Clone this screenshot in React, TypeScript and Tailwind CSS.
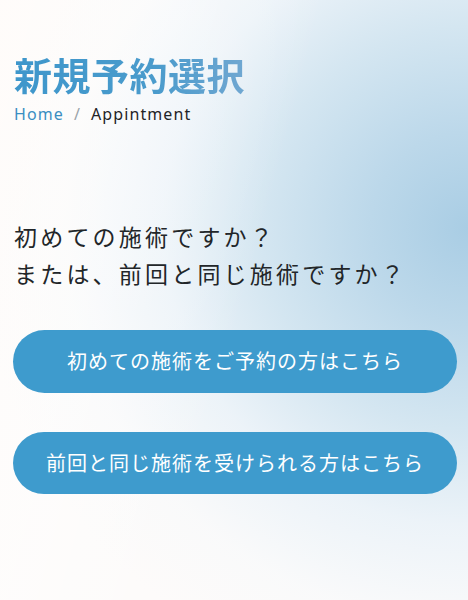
export default function App() {
  return (
    <div className="relative min-h-[600px] w-full overflow-hidden bg-[#fdfbfa] font-['Noto_Sans_CJK_JP',sans-serif]">
      <div className="absolute inset-0 bg-[radial-gradient(ellipse_105%_80%_at_100%_38%,#a9cde4_0%,#bcd8ea_20%,#d4e6f1_42%,rgba(232,241,248,0.8)_62%,rgba(244,248,251,0.4)_82%,rgba(255,255,255,0)_100%)]" />
      <div className="absolute inset-0 bg-[linear-gradient(105deg,rgba(255,252,250,0.85)_0%,rgba(255,255,255,0.35)_28%,rgba(255,255,255,0)_52%)]" />

      <div className="relative flex flex-col pt-[51px]">
        <h1 className="px-[14px] text-[38px] font-bold leading-[1.2] tracking-[0.5px] w-fit bg-[linear-gradient(90deg,#3d96cb_0%,#4a9bcc_60%,#76a9d2_100%)] bg-clip-text text-transparent">
          新規予約選択
        </h1>
        <div className="px-[14px] mt-[9px] flex items-center text-[16px] tracking-[1.1px] font-['Noto_Sans',sans-serif] leading-none">
          <span className="text-[#3a8ec2]">Home</span>
          <span className="mx-[10px] text-[#9aa3aa]">/</span>
          <span className="text-[#1f2326]">Appintment</span>
        </div>

        <div className="px-[14px] mt-[96px] text-[23px] leading-[37px] tracking-[3.2px] text-[#222629]">
          <p>初めての施術ですか？</p>
          <p>または、前回と同じ施術ですか？</p>
        </div>

        <div className="ml-[13px] mr-[11px] mt-[38px] flex flex-col gap-[39px]">
          <button className="h-[63px] rounded-full bg-[#3e9bcd] text-white text-[20px] tracking-[1px]">
            初めての施術をご予約の方はこちら
          </button>
          <button className="h-[62px] rounded-full bg-[#3e9bcd] text-white text-[20px] tracking-[1px]">
            前回と同じ施術を受けられる方はこちら
          </button>
        </div>
      </div>
    </div>
  );
}
